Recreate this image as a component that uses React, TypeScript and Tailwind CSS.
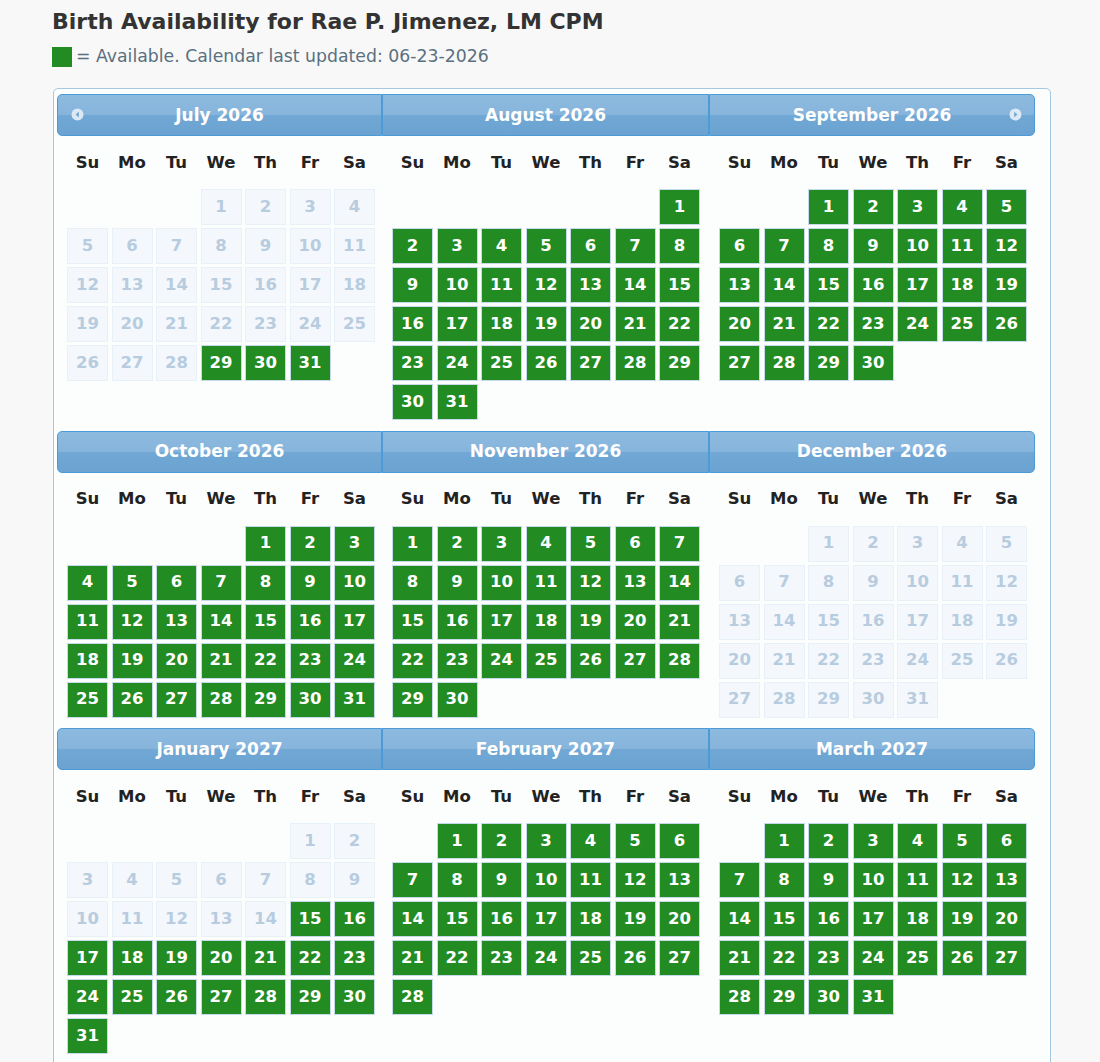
import React from "react";

type MonthInfo = {
    year: number
    month: number // 0-based
    isAvail: (day: number) => boolean
}

const monthNames = ["January", "February", "March", "April", "May", "June", "July", "August", "September", "October", "November", "December"]
const dayNames = ["Su", "Mo", "Tu", "We", "Th", "Fr", "Sa"]

const months: MonthInfo[] = [
    {year: 2026, month: 6, isAvail: (d) => d >= 29},
    {year: 2026, month: 7, isAvail: () => true},
    {year: 2026, month: 8, isAvail: () => true},
    {year: 2026, month: 9, isAvail: () => true},
    {year: 2026, month: 10, isAvail: () => true},
    {year: 2026, month: 11, isAvail: () => false},
    {year: 2027, month: 0, isAvail: (d) => d >= 15},
    {year: 2027, month: 1, isAvail: () => true},
    {year: 2027, month: 2, isAvail: () => true},
]

const CircleArrow = ({dir}: { dir: "w" | "e" }) => (
    <svg width="13" height="13" viewBox="0 0 13 13">
        <circle cx="6.5" cy="6.5" r="6" fill="#dce8f4"/>
        {dir === "w"
            ? <path d="M7.8 3.8 L4.6 6.5 L7.8 9.2 Z" fill="#6fa5d2"/>
            : <path d="M5.2 3.8 L8.4 6.5 L5.2 9.2 Z" fill="#6fa5d2"/>}
    </svg>
)

const MonthBlock = ({info, pos}: { info: MonthInfo, pos: number }) => {
    const first = new Date(info.year, info.month, 1).getDay()
    const count = new Date(info.year, info.month + 1, 0).getDate()
    const widths = ["w-[325px]", "w-[327px]", "w-[326px]"]
    const corner = pos === 0 ? "rounded-l-[5px]" : pos === 2 ? "rounded-r-[5px]" : ""
    const showPrev = info.year === 2026 && info.month === 6
    const showNext = info.year === 2026 && info.month === 8

    const cells: React.ReactNode[] = []
    for (let i = 0; i < first; i++) {
        cells.push(<div key={"e" + i}/>)
    }
    for (let d = 1; d <= count; d++) {
        const ok = info.isAvail(d)
        cells.push(
            <div key={d}
                 className={ok
                     ? "h-[36px] flex items-center justify-center border border-[#c5dbec] bg-[#228b22] text-white"
                     : "h-[36px] flex items-center justify-center border border-[#e8f0f8] bg-[#f4f8fc] text-[#b8cce0]"}>
                {d}
            </div>
        )
    }

    return (
        <div className={widths[pos] + " mb-[10.5px]"}>
            <div className={"relative h-[42px] flex items-center justify-center border border-[#4c9bd9] bg-[linear-gradient(to_bottom,#8dbadf_0%,#86b4db_50%,#71a8d5_50%,#6aa2d1_100%)] text-white font-bold text-[17px] " + corner}>
                {showPrev && <span className="absolute left-[13px] top-[13px] flex"><CircleArrow dir="w"/></span>}
                <span className="pt-px">{monthNames[info.month]} {info.year}</span>
                {showNext && <span className="absolute right-[12px] top-[13px] flex"><CircleArrow dir="e"/></span>}
            </div>
            <div className="pl-[10px]">
                <div className="grid grid-cols-[repeat(7,41px)] gap-x-[3.5px] h-[53px] pt-px items-center text-center font-bold text-[16.5px] text-[#222]">
                    {dayNames.map((n) => <div key={n}>{n}</div>)}
                </div>
                <div className="grid grid-cols-[repeat(7,41px)] gap-x-[3.5px] gap-y-[3px] font-bold text-[16.5px]">
                    {cells}
                </div>
            </div>
        </div>
    )
}

const App = () => {
    const rows = [months.slice(0, 3), months.slice(3, 6), months.slice(6, 9)]
    return (
        <div className="min-h-screen bg-[#f8f8f8] pl-[52px] pt-[5px] pb-[20px] font-['DejaVu_Sans',sans-serif]">
            <div className="text-[22px] font-bold text-[#333] leading-[34px]">
                Birth Availability for Rae P. Jimenez, LM CPM
            </div>
            <div className="flex items-center gap-[4px] h-[30px] mt-[3px] text-[17.3px] text-[#5b707e]">
                <span className="inline-block w-[20px] h-[20px] bg-[#228b22]"/>
                <span>= Available. Calendar last updated: 06-23-2026</span>
            </div>
            <div className="mt-[16px] ml-px w-[998px] border border-[#a6c9e2] rounded-[5px] bg-[#fcfdfd] pt-[5px] pl-[3px]">
                {rows.map((r, i) => (
                    <div key={i} className="flex">
                        {r.map((m, j) => <MonthBlock key={j} info={m} pos={j}/>)}
                    </div>
                ))}
            </div>
        </div>
    )
}

export default App
